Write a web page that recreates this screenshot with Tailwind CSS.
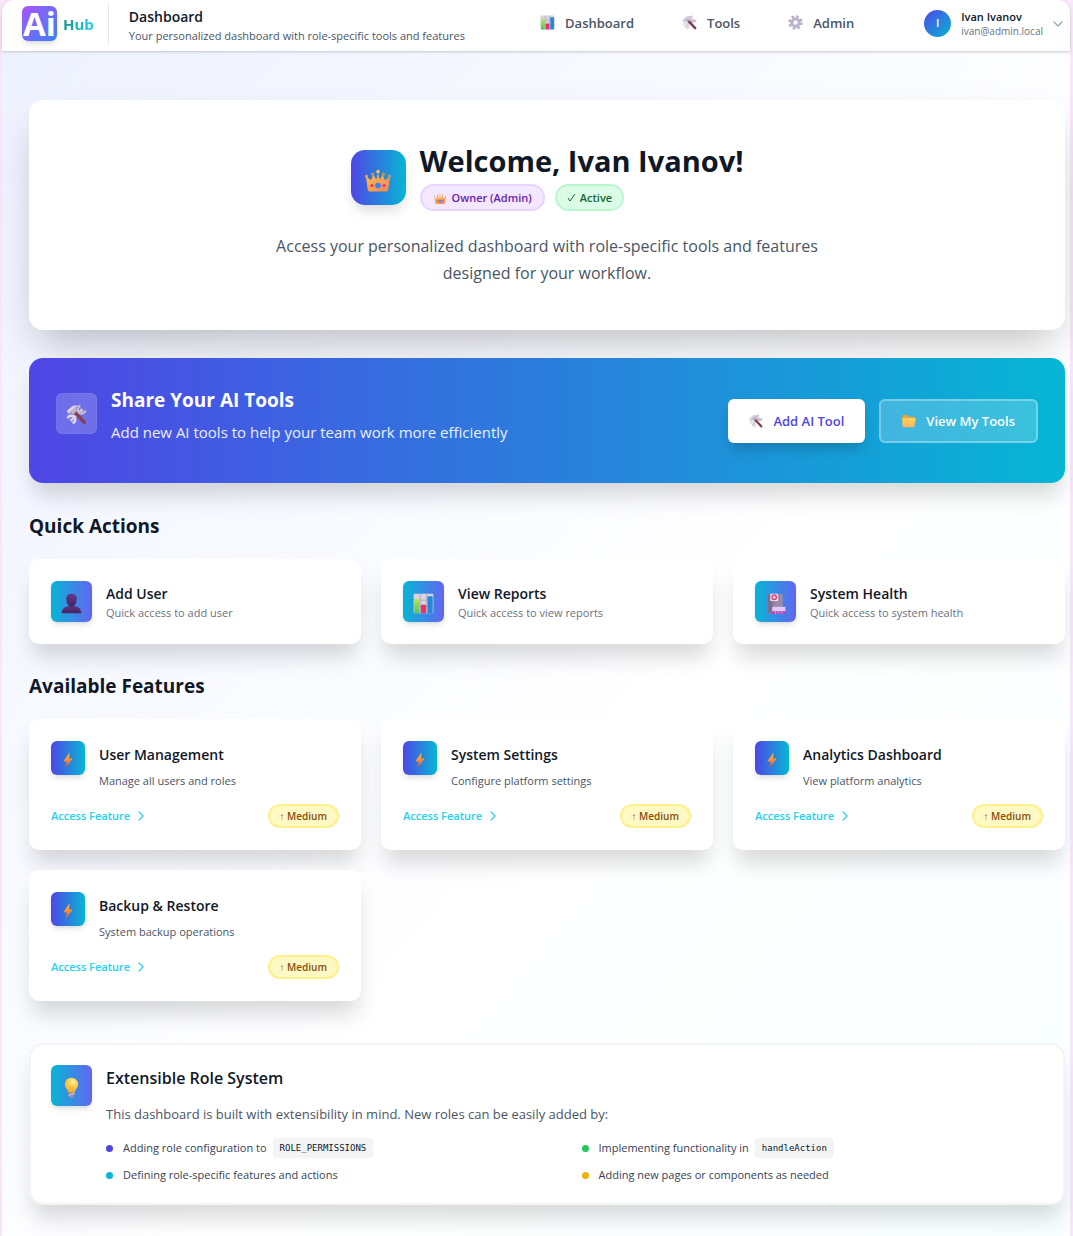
<!DOCTYPE html>
<html lang="en">
<head>
<meta charset="utf-8">
<meta name="viewport" content="width=device-width, initial-scale=1">
<title>Ai Hub – Dashboard</title>
<script src="https://cdn.jsdelivr.net/npm/@tailwindcss/browser@4"></script>
</head>
<body class="min-h-screen bg-[#f9e6fb] pr-[3px] pl-[2px] font-['Open_Sans','Noto_Sans',sans-serif] text-gray-900">

<svg width="0" height="0" class="absolute" aria-hidden="true">
  <defs>
    <linearGradient id="g-gold" x1="0" y1="0" x2="1" y2="1"><stop offset="0" stop-color="#ffc04d"/><stop offset="1" stop-color="#f0845a"/></linearGradient>
    <linearGradient id="g-green" x1="0" y1="0" x2="0" y2="1"><stop offset="0" stop-color="#b4e85a"/><stop offset="1" stop-color="#4fc35c"/></linearGradient>
    <linearGradient id="g-bolt" x1="0" y1="0" x2="0" y2="1"><stop offset="0" stop-color="#ffc145"/><stop offset=".5" stop-color="#ff8b3d"/><stop offset="1" stop-color="#f0503f"/></linearGradient>
    <linearGradient id="g-folder" x1="0" y1="0" x2="0" y2="1"><stop offset="0" stop-color="#ffd45a"/><stop offset="1" stop-color="#f9b562"/></linearGradient>
    <linearGradient id="g-user" x1="0" y1="0" x2="0" y2="1"><stop offset="0" stop-color="#643a8e"/><stop offset="1" stop-color="#452362"/></linearGradient>
    <radialGradient id="g-bulb" cx=".6" cy=".3" r=".8"><stop offset="0" stop-color="#fff3a8"/><stop offset=".4" stop-color="#ffd04b"/><stop offset="1" stop-color="#f7a531"/></radialGradient>
  </defs>
  <symbol id="i-chart" viewBox="0 0 32 32">
    <rect x="1" y="1" width="30" height="30" rx="1.500" fill="#d9d2e0"/>
    <path d="M1 11h30M1 21h30M11 1v30M21 1v30" stroke="#b3a8be" stroke-width="1.500"/>
    <rect x="2" y="9" width="8" height="22" rx="1" fill="url(#g-green)"/>
    <rect x="12" y="18" width="8" height="13" rx="1" fill="#ee2f6b"/>
    <rect x="22" y="5" width="8" height="26" rx="1" fill="#2488dc"/>
  </symbol>
  <symbol id="i-tools" viewBox="0 0 32 32">
    <path d="M7 26 25 8" stroke="#cfc8d9" stroke-width="4.500"/>
    <path d="M22 2.500a6 6 0 1 0 7.500 7.500" fill="none" stroke="#c3bad0" stroke-width="4"/>
    <path d="M2.500 22a6 6 0 1 1 7.500 7.500" fill="none" stroke="#ddd7e6" stroke-width="4"/>
    <path d="m13 12 15 16" stroke="#85404e" stroke-width="5.500" stroke-linecap="round"/>
    <path d="M1 11 10 3l8-1-3 4 1 5-5 5-3-3-4 3z" fill="#bdb4ca"/>
    <path d="M1 11 10 3l8-1-7 5-7 6z" fill="#dcd6e5"/>
  </symbol>
  <symbol id="i-gear" viewBox="0 0 32 32">
    <circle cx="16" cy="16" r="13" fill="none" stroke="#b8aec9" stroke-width="5" stroke-dasharray="5.400 4.811"/>
    <circle cx="16" cy="16" r="8.500" fill="none" stroke="#bfb5d0" stroke-width="6"/>
    <circle cx="16" cy="16" r="5.500" fill="none" stroke="#9688ab" stroke-width="1"/>
  </symbol>
  <symbol id="i-crown" viewBox="0 0 32 32">
    <path d="m1 10 6.500 5L10 8l4 6 2-8 2 8 4-6 2.500 7 6.500-5-2.500 17q-.3 2-2.500 2H6q-2.200 0-2.500-2z" fill="url(#g-gold)"/>
    <circle cx="1.800" cy="10" r="1.700" fill="#f5a843"/><circle cx="30.200" cy="10" r="1.700" fill="#ee9154"/>
    <circle cx="9.500" cy="7.500" r="2" fill="#c99a45"/><circle cx="22.500" cy="7.500" r="2" fill="#c99a45"/><circle cx="16" cy="4.500" r="2.200" fill="#ffc04d"/>
    <circle cx="16" cy="21.500" r="3.500" fill="#3b82f6"/><circle cx="8.500" cy="21.500" r="1.900" fill="#e8305f"/><circle cx="23.500" cy="21.500" r="1.900" fill="#e8305f"/>
  </symbol>
  <symbol id="i-folder" viewBox="0 0 32 32">
    <path d="M1 4q0-2 2-2h8l4 4h12q2 0 2 2v15H1z" fill="#e9a336"/>
    <path d="M5 11q.5-2 2.500-2H29q2.500 0 2 2.500L28.500 28q-.5 2-2.500 2H3q-2 0-2-2V8z" fill="url(#g-folder)"/>
  </symbol>
  <symbol id="i-user" viewBox="0 0 32 32">
    <path d="M1 31q0-9 9-11l3-1v-4h6v4l3 1q9 2 9 11z" fill="url(#g-user)"/>
    <path d="M8 8q0-7 8-7t8 7q0 12-8 13Q8 20 8 8z" fill="url(#g-user)"/>
  </symbol>
  <symbol id="i-hospital" viewBox="0 0 32 32">
    <rect x="4" y="2" width="23" height="29" fill="#9a8aa8"/><rect x="4" y="2" width="8" height="29" fill="#7d6d8c"/>
    <rect x="10" y="12" width="3" height="15" fill="#87769a"/>
    <rect x="8" y="1" width="12" height="11" rx="1.500" fill="#efe6f5"/>
    <circle cx="14" cy="6.500" r="4.500" fill="#ea3d72"/><path d="M14 4v5M11.500 6.500h5" stroke="#fff" stroke-width="1.500"/>
    <rect x="11" y="21" width="20" height="7" fill="#e3c8fa"/><rect x="11" y="28" width="20" height="3.500" fill="#c340bd"/>
    <path d="M16 28v3.500m5-3.500v3.500m5-3.500v3.500" stroke="#e3c8fa"/>
  </symbol>
  <symbol id="i-bolt" viewBox="0 0 32 32"><path d="M19 1 7 18q-.5 1 .5 1H14l-3 12L25 14q.5-1-.5-1H18z" fill="url(#g-bolt)"/></symbol>
  <symbol id="i-bulb" viewBox="0 0 32 32">
    <path d="M16 1a10 10 0 0 0-10 10c0 6 4.500 7 5.500 13h9C21.500 18 26 17 26 11A10 10 0 0 0 16 1z" fill="url(#g-bulb)"/>
    <path d="m13 12 2 11m4-11-2 11" stroke="#ef9d33" fill="none"/>
    <path d="M11.500 24h9v5l-2.500 2.500h-4L11.500 29z" fill="#9d87a8"/><path d="m11.500 28 9-3" stroke="#e0cfe4" stroke-width="1.500"/>
  </symbol>
  <symbol id="i-right" viewBox="0 0 8 12"><path d="m2 2 4 4-4 4" fill="none" stroke="currentColor" stroke-width="1.200" stroke-linecap="round" stroke-linejoin="round"/></symbol>
</svg>

<div class="min-h-screen rounded-t-xl bg-linear-to-br/srgb from-[#eef2ff] via-white via-60% to-[#f9ffff] pb-[31px]">
  <header class="flex h-[51px] items-center rounded-t-xl bg-white pr-[7px] pl-5 shadow-[0_1px_3px_rgba(0,0,0,0.2)]">
    <a href="#" class="flex items-center gap-[6px] pb-1">
      <span class="flex h-[35px] w-[35px] items-center justify-center rounded-md bg-linear-to-br/srgb from-[#a855f7] to-[#3b82f6] text-[33px] leading-[35px] font-bold text-white shadow-md">Ai</span>
      <span class="bg-linear-to-r/srgb from-[#0d9488] to-[#22d3ee] bg-clip-text text-[15px] leading-5 font-bold text-transparent">Hub</span>
    </a>
    <div class="mb-1 ml-[14px] h-10 w-px bg-gray-200"></div>
    <div class="ml-5">
      <h1 class="text-[14px] leading-5 font-semibold">Dashboard</h1>
      <p class="text-[11px] leading-[18px] text-gray-600">Your personalized dashboard with role-specific tools and features</p>
    </div>
    <nav class="mb-[6px] ml-auto flex gap-12 text-[13px] leading-5 font-semibold text-gray-600">
      <a href="#" class="flex items-center gap-[10px]"><svg class="size-[15px]"><use href="#i-chart"/></svg>Dashboard</a>
      <a href="#" class="flex items-center gap-[10px]"><svg class="size-[15px]"><use href="#i-tools"/></svg>Tools</a>
      <a href="#" class="flex items-center gap-[10px]"><svg class="size-[15px]"><use href="#i-gear"/></svg>Admin</a>
    </nav>
    <button class="mb-1 ml-[70px] flex items-center text-left">
      <span class="flex size-[27px] items-center justify-center rounded-full bg-linear-to-br/srgb from-[#4f46e5] to-[#06b6d4] text-[11px] font-semibold text-white">I</span>
      <span class="ml-[10px]">
        <span class="block text-[11px] leading-[14px] font-semibold">Ivan Ivanov</span>
        <span class="block text-[10px] leading-[14px] text-gray-500">ivan@admin.local</span>
      </span>
      <svg class="ml-[10px] h-[6px] w-[10px] text-gray-400" viewBox="0 0 10 6"><path d="m1 1 4 4 4-4" fill="none" stroke="currentColor" stroke-width="1.200" stroke-linecap="round" stroke-linejoin="round"/></svg>
    </button>
  </header>

  <main class="pt-[49px] pr-[5px] pl-[27px]">
    <section class="rounded-[14px] bg-white px-7 pt-[43px] pb-[43px] text-center shadow-[0_21px_43px_-10px_rgba(0,0,0,0.25)]">
      <div class="flex items-center justify-center gap-[14px]">
        <div class="flex size-[55px] items-center justify-center rounded-[14px] bg-linear-to-r/srgb from-[#4f46e5] to-[#06b6d4] pt-2 shadow-[0_8px_13px_-3px_rgba(0,0,0,0.15)]"><svg class="size-[26px]"><use href="#i-crown"/></svg></div>
        <div>
          <h2 class="text-[29px] leading-9 font-bold">Welcome, Ivan Ivanov!</h2>
          <div class="mt-[5px] flex gap-[10px] text-[11px] leading-[23px] font-semibold">
            <span class="flex items-center gap-[6px] rounded-full border-2 border-purple-200 bg-purple-100 px-[11px] text-[#6b21a8]"><svg class="mt-[2px] ml-px size-3"><use href="#i-crown"/></svg>Owner (Admin)</span>
            <span class="flex items-center gap-1 rounded-full border-2 border-green-200 bg-green-100 px-[10px] text-[#166534]"><svg class="size-[9px]" viewBox="0 0 9 9"><path d="m1 5 2 3L8 1" fill="none" stroke="currentColor"/></svg>Active</span>
          </div>
        </div>
      </div>
      <p class="mx-auto mt-[22px] max-w-[576px] text-[16px] leading-[27px] text-gray-600">Access your personalized dashboard with role-specific tools and features designed for your workflow.</p>
    </section>

    <section class="mt-7 flex items-center justify-between rounded-[14px] bg-linear-to-r/srgb from-[#4f46e5] to-[#06b6d4] p-[27px] shadow-[0_17px_21px_-4px_rgba(0,0,0,0.15)]">
      <div class="mb-[11px] flex gap-[14px]">
        <div class="mt-2 flex size-[41px] items-center justify-center rounded-md border border-white/5 bg-white/20"><svg class="mt-[2px] size-[21px]"><use href="#i-tools"/></svg></div>
        <div class="text-white">
          <h3 class="text-[19px] leading-[30px] font-bold">Share Your AI Tools</h3>
          <p class="mt-1 text-[15px] leading-[26px] text-white/90">Add new AI tools to help your team work more efficiently</p>
        </div>
      </div>
      <div class="flex gap-[14px] text-[13px] leading-5 font-semibold">
        <button class="flex h-11 items-center gap-[10px] rounded-md bg-white px-[21px] text-[#4f46e5] shadow-[0_8px_13px_-3px_rgba(0,0,0,0.2)]"><svg class="size-[14px]"><use href="#i-tools"/></svg>Add AI Tool</button>
        <button class="flex h-11 items-center gap-[10px] rounded-md border-2 border-white/30 bg-white/20 px-[21px] text-white"><svg class="size-[14px]"><use href="#i-folder"/></svg>View My Tools</button>
      </div>
    </section>

    <h2 class="mt-7 mb-[18px] text-[19px] leading-[30px] font-bold">Quick Actions</h2>
    <div class="grid grid-cols-3 gap-5">
      <a href="#" class="flex items-center gap-[14px] rounded-[10px] bg-white p-[22px] shadow-[0_17px_21px_-4px_rgba(0,0,0,0.15)]">
        <span class="flex size-[41px] items-center justify-center rounded-md bg-linear-to-r/srgb from-[#06b6d4] to-[#6366f1] pt-[3px] shadow-md"><svg class="size-[21px]"><use href="#i-user"/></svg></span>
        <span class="pt-[3px]"><span class="block text-[14px] leading-[19px] font-semibold">Add User</span><span class="block text-[11px] leading-[19px] text-gray-500">Quick access to add user</span></span>
      </a>
      <a href="#" class="flex items-center gap-[14px] rounded-[10px] bg-white p-[22px] shadow-[0_17px_21px_-4px_rgba(0,0,0,0.15)]">
        <span class="flex size-[41px] items-center justify-center rounded-md bg-linear-to-r/srgb from-[#06b6d4] to-[#6366f1] pt-[3px] shadow-md"><svg class="size-[21px]"><use href="#i-chart"/></svg></span>
        <span class="pt-[3px]"><span class="block text-[14px] leading-[19px] font-semibold">View Reports</span><span class="block text-[11px] leading-[19px] text-gray-500">Quick access to view reports</span></span>
      </a>
      <a href="#" class="flex items-center gap-[14px] rounded-[10px] bg-white p-[22px] shadow-[0_17px_21px_-4px_rgba(0,0,0,0.15)]">
        <span class="flex size-[41px] items-center justify-center rounded-md bg-linear-to-r/srgb from-[#06b6d4] to-[#6366f1] pt-[3px] shadow-md"><svg class="size-[21px]"><use href="#i-hospital"/></svg></span>
        <span class="pt-[3px]"><span class="block text-[14px] leading-[19px] font-semibold">System Health</span><span class="block text-[11px] leading-[19px] text-gray-500">Quick access to system health</span></span>
      </a>
    </div>

    <h2 class="mt-[27px] mb-[18px] text-[19px] leading-[30px] font-bold">Available Features</h2>
    <div class="grid grid-cols-3 gap-5">
      <article class="rounded-[10px] bg-white p-[22px] shadow-[0_17px_21px_-4px_rgba(0,0,0,0.15)]">
        <div class="flex gap-[14px]">
          <div class="flex size-[34px] items-center justify-center rounded-md bg-linear-to-r/srgb from-[#4f46e5] to-[#06b6d4] pt-1 shadow-md"><svg class="size-4"><use href="#i-bolt"/></svg></div>
          <div class="pt-[2px]"><h3 class="text-[14px] leading-6 font-semibold">User Management</h3><p class="mt-1 text-[11px] leading-5 text-gray-600">Manage all users and roles</p></div>
        </div>
        <div class="mt-[13px] flex items-center justify-between">
          <a href="#" class="flex items-center gap-[7px] text-[11px] leading-5 font-semibold text-[#22d3ee]">Access Feature<svg class="h-3 w-2"><use href="#i-right"/></svg></a>
          <span class="rounded-full border-2 border-[#fef08a] bg-[#fef9c3] px-[10px] text-[10px] leading-5 font-semibold text-[#854d0e]">↑ Medium</span>
        </div>
      </article>
      <article class="rounded-[10px] bg-white p-[22px] shadow-[0_17px_21px_-4px_rgba(0,0,0,0.15)]">
        <div class="flex gap-[14px]">
          <div class="flex size-[34px] items-center justify-center rounded-md bg-linear-to-r/srgb from-[#4f46e5] to-[#06b6d4] pt-1 shadow-md"><svg class="size-4"><use href="#i-bolt"/></svg></div>
          <div class="pt-[2px]"><h3 class="text-[14px] leading-6 font-semibold">System Settings</h3><p class="mt-1 text-[11px] leading-5 text-gray-600">Configure platform settings</p></div>
        </div>
        <div class="mt-[13px] flex items-center justify-between">
          <a href="#" class="flex items-center gap-[7px] text-[11px] leading-5 font-semibold text-[#22d3ee]">Access Feature<svg class="h-3 w-2"><use href="#i-right"/></svg></a>
          <span class="rounded-full border-2 border-[#fef08a] bg-[#fef9c3] px-[10px] text-[10px] leading-5 font-semibold text-[#854d0e]">↑ Medium</span>
        </div>
      </article>
      <article class="rounded-[10px] bg-white p-[22px] shadow-[0_17px_21px_-4px_rgba(0,0,0,0.15)]">
        <div class="flex gap-[14px]">
          <div class="flex size-[34px] items-center justify-center rounded-md bg-linear-to-r/srgb from-[#4f46e5] to-[#06b6d4] pt-1 shadow-md"><svg class="size-4"><use href="#i-bolt"/></svg></div>
          <div class="pt-[2px]"><h3 class="text-[14px] leading-6 font-semibold">Analytics Dashboard</h3><p class="mt-1 text-[11px] leading-5 text-gray-600">View platform analytics</p></div>
        </div>
        <div class="mt-[13px] flex items-center justify-between">
          <a href="#" class="flex items-center gap-[7px] text-[11px] leading-5 font-semibold text-[#22d3ee]">Access Feature<svg class="h-3 w-2"><use href="#i-right"/></svg></a>
          <span class="rounded-full border-2 border-[#fef08a] bg-[#fef9c3] px-[10px] text-[10px] leading-5 font-semibold text-[#854d0e]">↑ Medium</span>
        </div>
      </article>
      <article class="rounded-[10px] bg-white p-[22px] shadow-[0_17px_21px_-4px_rgba(0,0,0,0.15)]">
        <div class="flex gap-[14px]">
          <div class="flex size-[34px] items-center justify-center rounded-md bg-linear-to-r/srgb from-[#4f46e5] to-[#06b6d4] pt-1 shadow-md"><svg class="size-4"><use href="#i-bolt"/></svg></div>
          <div class="pt-[2px]"><h3 class="text-[14px] leading-6 font-semibold">Backup &amp; Restore</h3><p class="mt-1 text-[11px] leading-5 text-gray-600">System backup operations</p></div>
        </div>
        <div class="mt-[13px] flex items-center justify-between">
          <a href="#" class="flex items-center gap-[7px] text-[11px] leading-5 font-semibold text-[#22d3ee]">Access Feature<svg class="h-3 w-2"><use href="#i-right"/></svg></a>
          <span class="rounded-full border-2 border-[#fef08a] bg-[#fef9c3] px-[10px] text-[10px] leading-5 font-semibold text-[#854d0e]">↑ Medium</span>
        </div>
      </article>
    </div>

    <section class="mt-[42px] flex gap-[14px] rounded-[14px] border-2 border-gray-100 bg-white px-5 pt-5 pb-[17px] shadow-[0_17px_21px_-4px_rgba(0,0,0,0.15)]">
      <div class="flex size-[41px] shrink-0 items-center justify-center rounded-md bg-linear-to-r/srgb from-[#06b6d4] to-[#6366f1] pt-[3px] shadow-md"><svg class="size-[21px]"><use href="#i-bulb"/></svg></div>
      <div class="flex-1">
        <h3 class="text-[16px] leading-[27px] font-semibold">Extensible Role System</h3>
        <p class="mt-[11px] text-[13px] leading-[22px] text-gray-600">This dashboard is built with extensibility in mind. New roles can be easily added by:</p>
        <ul class="mt-3 grid grid-cols-2 gap-x-[14px] gap-y-[5px] text-[11px] leading-[22px] text-gray-700">
          <li class="flex items-center"><span class="mr-[10px] size-[7px] rounded-full bg-[#4f46e5]"></span>Adding role configuration to <code class="ml-[6px] rounded-sm bg-gray-100 px-[7px] font-['DejaVu_Sans_Mono',monospace] text-[9px] leading-5 text-gray-900">ROLE_PERMISSIONS</code></li>
          <li class="flex items-center"><span class="mr-[10px] size-[7px] rounded-full bg-[#22c55e]"></span>Implementing functionality in <code class="ml-[6px] rounded-sm bg-gray-100 px-[7px] font-['DejaVu_Sans_Mono',monospace] text-[9px] leading-5 text-gray-900">handleAction</code></li>
          <li class="flex items-center"><span class="mr-[10px] size-[7px] rounded-full bg-[#06b6d4]"></span>Defining role-specific features and actions</li>
          <li class="flex items-center"><span class="mr-[10px] size-[7px] rounded-full bg-[#eab308]"></span>Adding new pages or components as needed</li>
        </ul>
      </div>
    </section>
  </main>
</div>
</body>
</html>
